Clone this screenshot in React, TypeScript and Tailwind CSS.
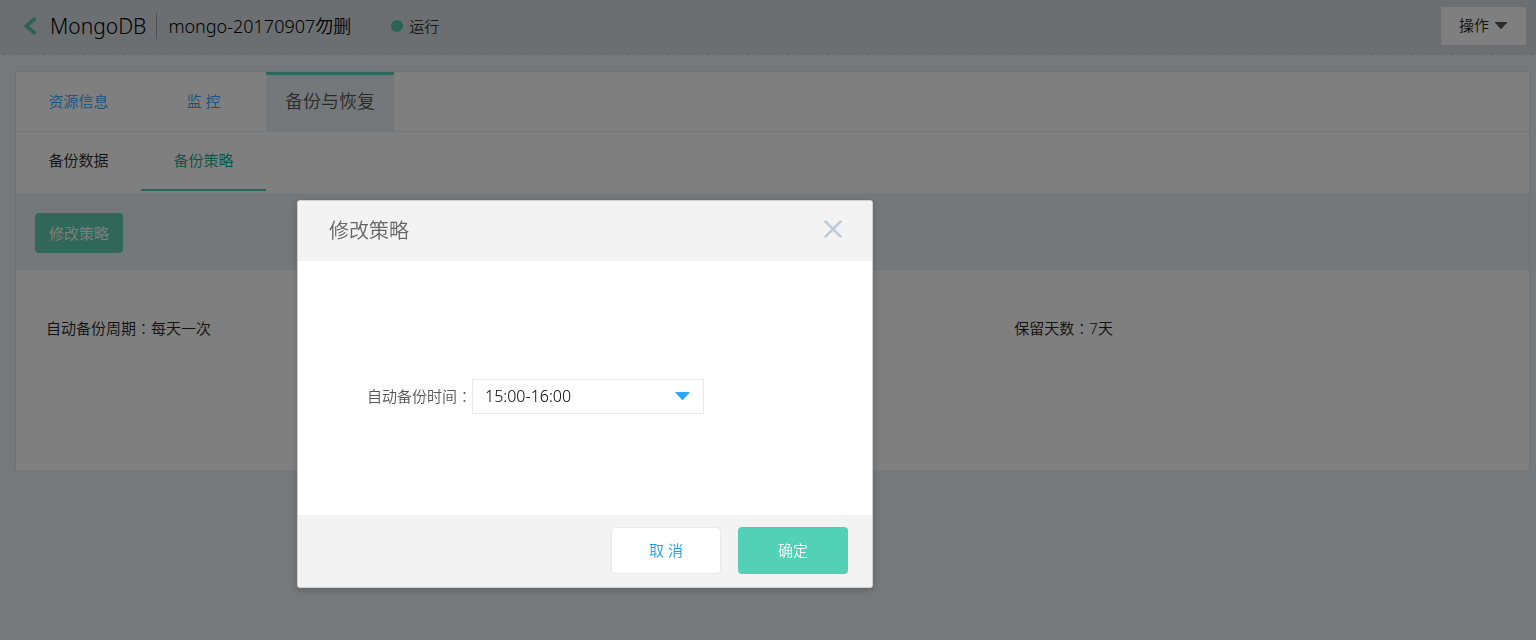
import { useState } from "react";

function Caret({ className }: { className: string }) {
  return (
    <svg viewBox="0 0 14 8" className={className} fill="currentColor" aria-hidden="true">
      <path d="M0.6 0h12.8a.5.5 0 0 1 .4.9L7.6 7.7a.8.8 0 0 1-1.2 0L.2.9A.5.5 0 0 1 .6 0z" />
    </svg>
  );
}

function Colon() {
  return <span className="font-['Noto_Sans_CJK_TC',sans-serif] font-light">：</span>;
}

function PageHeader() {
  return (
    <header className="flex h-14 items-center justify-between border-b border-dashed border-[#f6fafc] bg-[#d6dee2] pr-[10px] pb-1">
      <div className="flex items-center">
        <a href="#back" aria-label="返回" className="ml-[23px] text-[#54c7a9]">
          <svg viewBox="0 0 14 20" className="h-5 w-[14px]" fill="none" stroke="currentColor" strokeWidth="3.8" aria-hidden="true">
            <path d="M12.4 2.2 3.2 10l9.2 7.8" />
          </svg>
        </a>
        <h1 className="ml-[13px] text-[21px] leading-[26px] text-black">MongoDB</h1>
        <span className="ml-[10px] h-[26px] w-px bg-[#9da3a6]" />
        <span className="ml-[11px] text-lg leading-[26px] text-black">mongo-20170907勿删</span>
        <span className="ml-10 h-3 w-3 rounded-full bg-[#54c7a9]" />
        <span className="ml-[6px] text-[15px] leading-6 text-[#333]">运行</span>
      </div>
      <button type="button" className="flex h-[38px] items-center gap-[5px] bg-white pr-[18px] pl-[18px] text-[15px] text-[#222]">
        操作
        <Caret className="h-[7px] w-[14px] text-[#555]" />
      </button>
    </header>
  );
}

function Details() {
  return (
    <main className="mt-[15px] mr-[6px] ml-[15px] border border-b-0 border-[#dfe5ea] bg-white">
      <nav className="flex h-[60px] border-b border-[#e6ebef] text-[15px] text-[#2ea6f5]">
        <a href="#info" className="flex w-[125px] items-center justify-center">资源信息</a>
        <a href="#monitor" className="flex w-[125px] items-center justify-center">监 控</a>
        <a href="#backup" className="flex w-32 items-center justify-center border-t-3 border-[#52d1b5] bg-[#e9f1f7] pb-1 text-lg text-[#555]">
          备份与恢复
        </a>
      </nav>
      <nav className="flex h-[61px] pb-[2px] text-[15px]">
        <a href="#data" className="flex w-[125px] items-center justify-center border-b-2 border-transparent text-[#222]">备份数据</a>
        <a href="#policy" className="flex w-[125px] items-center justify-center border-b-2 border-[#52d1b5] text-[#0cab88]">备份策略</a>
      </nav>
      <div className="bg-[#e9f1f7] px-[19px] pt-5 pb-[17px]">
        <button type="button" className="h-10 w-[88px] rounded bg-[#60cfb2] text-[15px] text-white">修改策略</button>
      </div>
      <div className="grid h-[200px] grid-cols-[64%_1fr] pt-[46px] text-[15px] leading-6 text-[#222]">
        <p className="pl-[30px]">自动备份周期<Colon />每天一次</p>
        <p className="pl-[30px]">保留天数<Colon />7天</p>
      </div>
    </main>
  );
}

function PolicyDialog({ onClose }: { onClose: () => void }) {
  const [time, setTime] = useState("15:00-16:00");
  return (
    <div className="fixed inset-0 flex items-start bg-black/50 pt-[200px] pl-[297px]">
      <div
        role="dialog"
        aria-modal="true"
        aria-labelledby="dialog-title"
        className="w-[576px] overflow-hidden rounded-[3px] border border-[#d0d0d0] bg-white shadow-[0_2px_8px_rgba(0,0,0,0.2)]"
      >
        <div className="flex h-[60px] items-center justify-between bg-[#f3f3f3] pr-[30px] pl-[31px]">
          <h2 id="dialog-title" className="text-xl text-[#666]">修改策略</h2>
          <button type="button" aria-label="关闭" onClick={onClose} className="pb-1 text-[#bccbda]">
            <svg viewBox="0 0 18 18" className="h-[18px] w-[18px]" fill="none" stroke="currentColor" strokeWidth="2.6" aria-hidden="true">
              <path d="M.8.8l16.4 16.4M17.2.8L.8 17.2" />
            </svg>
          </button>
        </div>
        <div className="flex h-[254px] items-center pt-4 pl-[69px]">
          <label htmlFor="backup-time" className="text-[15px] text-[#555]">自动备份时间<Colon /></label>
          <div className="relative">
            <select
              id="backup-time"
              value={time}
              onChange={(e) => setTime(e.target.value)}
              className="h-[35px] w-[232px] appearance-none border border-[#e8e8e8] bg-white pl-3 text-base text-black"
            >
              <option>15:00-16:00</option>
              <option>16:00-17:00</option>
              <option>17:00-18:00</option>
            </select>
            <Caret className="pointer-events-none absolute top-[13px] right-[14px] h-2 w-[15px] text-[#2aa9ff]" />
          </div>
        </div>
        <div className="flex h-[72px] items-center justify-end gap-[17px] bg-[#f3f3f3] pr-6 pb-[2px]">
          <button type="button" onClick={onClose} className="h-[47px] w-[110px] rounded border border-[#e8e8e8] bg-white text-[15px] text-[#1b9cf5]">
            取 消
          </button>
          <button type="button" onClick={onClose} className="h-[47px] w-[110px] rounded bg-[#52d1b7] text-[15px] text-white">
            确定
          </button>
        </div>
      </div>
    </div>
  );
}

export default function App() {
  const [open, setOpen] = useState(true);
  return (
    <div className="min-h-screen bg-[#ebf3f8] font-['Noto_Sans','Noto_Sans_CJK_SC',sans-serif] font-[350]">
      <PageHeader />
      <Details />
      {open && <PolicyDialog onClose={() => setOpen(false)} />}
    </div>
  );
}
